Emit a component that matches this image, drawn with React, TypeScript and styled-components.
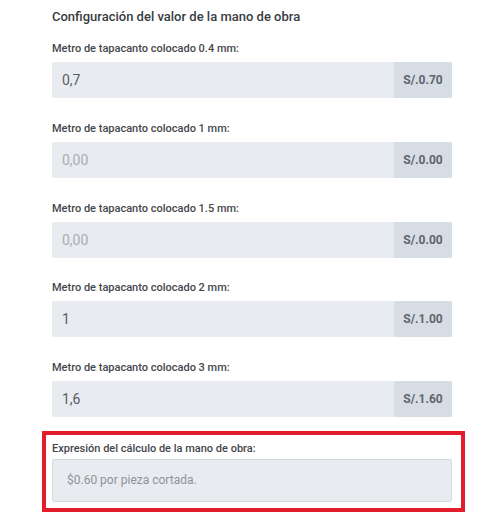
import React from "react";
import styled, { createGlobalStyle } from "styled-components";

const GlobalStyle = createGlobalStyle`
  html, body { margin: 0; padding: 0; background: #ffffff; }
  body { font-family: Roboto, "Liberation Sans", Arial, sans-serif; }
`;

const Page = styled.div`
  width: 503px;
  height: 519px;
  box-sizing: border-box;
  padding: 7px 0 0 52px;
  overflow: hidden;
`;

const Title = styled.h3`
  margin: 0 0 14px;
  font-size: 13px;
  line-height: 20px;
  font-weight: 500;
  color: #383c41;
`;

const Field = styled.div`
  width: 400px;
  margin-bottom: 22.75px;
`;

const Label = styled.label<{ $tight?: boolean }>`
  display: block;
  font-size: 11px;
  line-height: 16px;
  font-weight: 500;
  color: #44474c;
  margin-bottom: ${(p) => (p.$tight ? "2px" : "5px")};
`;

const InputGroup = styled.div`
  display: flex;
  height: 36px;
  border-radius: 2px;
  overflow: hidden;
  background: #e8ebf0;
`;

const Value = styled.div<{ $empty?: boolean }>`
  flex: 1;
  display: flex;
  align-items: center;
  padding-left: 10px;
  font-size: 14px;
  font-weight: 400;
  color: ${(p) => (p.$empty ? "#a9adb3" : "#5a5e63")};
`;

const Addon = styled.div`
  width: 58px;
  display: flex;
  align-items: center;
  justify-content: center;
  background: #d6dde5;
  font-size: 12px;
  font-weight: 700;
  color: #60656b;
`;

const Highlight = styled.div`
  width: 423px;
  box-sizing: border-box;
  margin: -9px 0 0 -10px;
  border: 4px solid #e31d2b;
  padding: 6px 9px 6px 6px;
`;

const TextArea = styled.div`
  height: 43px;
  box-sizing: border-box;
  display: flex;
  align-items: center;
  padding-left: 14px;
  background: #e8ebf0;
  border: 1px solid #d3d9e0;
  border-radius: 2px;
  font-size: 12px;
  color: #8e9399;
`;

const fields = [
  { label: "Metro de tapacanto colocado 0.4 mm:", value: "0,7", addon: "S/.0.70", empty: false },
  { label: "Metro de tapacanto colocado 1 mm:", value: "0,00", addon: "S/.0.00", empty: true },
  { label: "Metro de tapacanto colocado 1.5 mm:", value: "0,00", addon: "S/.0.00", empty: true },
  { label: "Metro de tapacanto colocado 2 mm:", value: "1", addon: "S/.1.00", empty: false },
  { label: "Metro de tapacanto colocado 3 mm:", value: "1,6", addon: "S/.1.60", empty: false },
];

export default function App() {
  return (
    <>
      <GlobalStyle />
      <Page>
        <Title>Configuración del valor de la mano de obra</Title>
        {fields.map((f) => (
          <Field key={f.label}>
            <Label>{f.label}</Label>
            <InputGroup>
              <Value $empty={f.empty}>{f.value}</Value>
              <Addon>{f.addon}</Addon>
            </InputGroup>
          </Field>
        ))}
        <Highlight>
          <Label $tight>Expresión del cálculo de la mano de obra:</Label>
          <TextArea>$0.60 por pieza cortada.</TextArea>
        </Highlight>
      </Page>
    </>
  );
}
